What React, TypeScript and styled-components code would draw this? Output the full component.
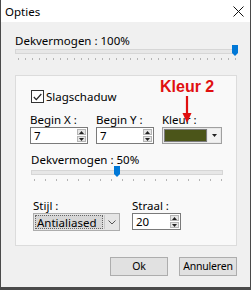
import React from 'react'
import styled, { createGlobalStyle } from 'styled-components'

const GlobalStyle = createGlobalStyle`
  html, body {
    margin: 0;
    padding: 0;
    background: #f0f0f0;
  }
  body {
    font-family: 'Noto Sans', 'Liberation Sans', sans-serif;
    font-size: 11.5px;
    color: #000;
  }
`

const Window = styled.div`
  width: 251px;
  height: 290px;
  box-sizing: border-box;
  display: flex;
  flex-direction: column;
  background: #f0f0f0;
  border-left: 1px solid #4a4a4a;
  border-right: 1px solid #4a4a4a;
  border-bottom: 3px solid #4a4a4a;
`

const TitleBar = styled.div`
  height: 22px;
  flex-shrink: 0;
  background: #fff;
  display: flex;
  align-items: center;
  justify-content: space-between;
  padding: 0 6px 0 4px;
`

const Title = styled.span`
  font-size: 11.5px;
  line-height: 15px;
`

const Body = styled.div`
  flex: 1;
  display: flex;
  flex-direction: column;
  padding: 0 13px 0 14px;
`

const Label = styled.div<{ $top?: number }>`
  line-height: 15px;
  margin-top: ${(p) => p.$top ?? 0}px;
  white-space: nowrap;
`

const SliderWrap = styled.div<{ $width?: string; $top: number }>`
  position: relative;
  width: ${(p) => p.$width ?? '100%'};
  height: 17px;
  margin-top: ${(p) => p.$top}px;
`

const Track = styled.div`
  position: absolute;
  left: 0;
  right: 0;
  top: 4px;
  height: 3px;
  background: #e7e7e7;
  border: 1px solid #d6d6d6;
`

const Ticks = styled.div<{ $step: number }>`
  position: absolute;
  left: 3px;
  right: 1px;
  top: 13px;
  height: 2px;
  background: repeating-linear-gradient(
    to right,
    #b4b4b4 0,
    #b4b4b4 1px,
    transparent 1px,
    transparent ${(p) => p.$step}px
  );
`

const Thumb = styled.svg`
  position: absolute;
  top: 0;
`

const Panel = styled.div`
  position: relative;
  margin-top: 13px;
  height: 171px;
  box-sizing: border-box;
  background: #f9f9f9;
  border: 1px solid #dcdcdc;
  padding: 0 14px 0 15px;
  display: flex;
  flex-direction: column;
`

const CheckRow = styled.label`
  display: flex;
  align-items: center;
  gap: 2px;
  margin-top: 13px;
  line-height: 15px;
`

const CheckBox = styled.span`
  width: 11px;
  height: 11px;
  border: 1px solid #333;
  background: #fff;
  display: flex;
  align-items: center;
  justify-content: center;
`

const FieldRow = styled.div`
  display: flex;
  gap: 9px;
  margin-top: 8px;
`

const Field = styled.div<{ $shift?: number }>`
  display: flex;
  flex-direction: column;
  margin-left: ${(p) => p.$shift ?? -1}px;
`

const SpinBox = styled.div<{ $width: number }>`
  width: ${(p) => p.$width}px;
  height: 17px;
  box-sizing: border-box;
  border: 1px solid #7a7a7a;
  background: #fff;
  display: flex;
  align-items: center;
  justify-content: space-between;
  padding: 1px 1px 1px 3px;
`

const SpinValue = styled.span`
  line-height: 14px;
`

const SpinButtons = styled.div`
  display: flex;
  flex-direction: column;
  gap: 1px;
  height: 13px;
`

const SpinBtn = styled.div`
  width: 9px;
  height: 6px;
  background: #e6e6e6;
  border: 1px solid #b5b5b5;
  box-sizing: border-box;
  display: flex;
  align-items: center;
  justify-content: center;
`

const ColorCombo = styled.div`
  width: 60px;
  height: 17px;
  box-sizing: border-box;
  border: 1px solid #a0a0a0;
  background: #e8e8e8;
  display: flex;
  padding: 1px;
  gap: 1px;
`

const Swatch = styled.div<{ $color: string }>`
  flex: 1;
  background: ${(p) => p.$color};
  border: 1px solid #7c7c7c;
`

const DropBtn = styled.div`
  width: 12px;
  display: flex;
  align-items: center;
  justify-content: center;
  background: #f2f2f2;
`

const Select = styled.div`
  width: 87px;
  height: 18px;
  box-sizing: border-box;
  border: 1px solid #adadad;
  background: #e5e5e5;
  display: flex;
  align-items: stretch;
  padding: 1px;
`

const SelectText = styled.div`
  flex: 1;
  display: flex;
  align-items: center;
  padding-left: 1px;
  background: #d6d6d6;
  border: 1px dotted #666;
  line-height: 13px;
  white-space: nowrap;
  overflow: hidden;
`

const Chevron = styled.div`
  width: 13px;
  display: flex;
  align-items: center;
  justify-content: center;
  border-left: 1px solid #c9c9c9;
  margin-left: 1px;
`

const BottomRow = styled.div`
  display: flex;
  gap: 13px;
`

const Annotation = styled.div`
  position: absolute;
  left: 144px;
  top: 2px;
  display: flex;
  flex-direction: column;
  align-items: center;
  color: #e01010;
  font-family: 'Liberation Sans', Arial, sans-serif;
  font-weight: bold;
  font-size: 16px;
  line-height: 18px;
  pointer-events: none;
`

const Footer = styled.div`
  display: flex;
  justify-content: flex-end;
  gap: 11px;
  margin-top: 11px;
  padding-right: 0px;
`

const Button = styled.button`
  width: 58px;
  height: 19px;
  box-sizing: border-box;
  background: #e1e1e1;
  border: 1px solid #adadad;
  font-family: inherit;
  font-size: 10.5px;
  letter-spacing: -0.2px;
  line-height: 15px;
  padding: 0;
  color: #000;
`

const ThumbIcon = ({ left }: { left: number }) => (
  <Thumb width='6' height='11' viewBox='0 0 6 11' style={{ left }}>
    <path d='M0 0 H6 V8 L3 11 L0 8 Z' fill='#0078d7' />
  </Thumb>
)

const Arrow = ({ up }: { up: boolean }) => (
  <svg width='5' height='3' viewBox='0 0 5 3'>
    <path d={up ? 'M2.5 0 L5 3 H0 Z' : 'M0 0 H5 L2.5 3 Z'} fill='#222' />
  </svg>
)

const Spin = ({ value, width }: { value: string; width: number }) => (
  <SpinBox $width={width}>
    <SpinValue>{value}</SpinValue>
    <SpinButtons>
      <SpinBtn>
        <Arrow up />
      </SpinBtn>
      <SpinBtn>
        <Arrow up={false} />
      </SpinBtn>
    </SpinButtons>
  </SpinBox>
)

export default function App() {
  return (
    <>
      <GlobalStyle />
      <Window>
        <TitleBar>
          <Title>Opties</Title>
          <svg width='11' height='11' viewBox='0 0 11 11'>
            <path d='M0.5 0.5 L10.5 10.5 M10.5 0.5 L0.5 10.5' stroke='#111' strokeWidth='1' />
          </svg>
        </TitleBar>
        <Body>
          <Label $top={11}>Dekvermogen : 100%</Label>
          <SliderWrap $top={-3}>
            <Track />
            <Ticks $step={7} />
            <ThumbIcon left={217} />
          </SliderWrap>

          <Panel>
            <CheckRow>
              <CheckBox>
                <svg width='9' height='8' viewBox='0 0 9 8'>
                  <path d='M0.8 4 L3.3 6.6 L8.3 1' stroke='#222' strokeWidth='1.2' fill='none' />
                </svg>
              </CheckBox>
              Slagschaduw
            </CheckRow>

            <FieldRow>
              <Field>
                <Label>Begin X :</Label>
                <Spin value='7' width={58} />
              </Field>
              <Field>
                <Label>Begin Y :</Label>
                <Spin value='7' width={58} />
              </Field>
              <Field>
                <Label>Kleur :</Label>
                <ColorCombo>
                  <Swatch $color='#4b5519' />
                  <DropBtn>
                    <Arrow up={false} />
                  </DropBtn>
                </ColorCombo>
              </Field>
            </FieldRow>

            <Label $top={8}>Dekvermogen : 50%</Label>
            <SliderWrap $width='192px' $top={-1}>
              <Track />
              <Ticks $step={11} />
              <ThumbIcon left={83} />
            </SliderWrap>

            <BottomRow>
              <Field $shift={2}>
                <Label $top={15}>Stijl :</Label>
                <Select>
                  <SelectText>Antialiased</SelectText>
                  <Chevron>
                    <svg width='8' height='5' viewBox='0 0 8 5'>
                      <path d='M0.5 0.5 L4 4 L7.5 0.5' stroke='#555' fill='none' />
                    </svg>
                  </Chevron>
                </Select>
              </Field>
              <Field>
                <Label $top={15}>Straal :</Label>
                <Spin value='20' width={49} />
              </Field>
            </BottomRow>

            <Annotation>
              <span>Kleur 2</span>
              <svg width='10' height='27' viewBox='0 0 10 27'>
                <path d='M5 0 V19' stroke='#e01010' strokeWidth='2.2' />
                <path d='M0.5 17 L9.5 17 L5 27 Z' fill='#e01010' />
              </svg>
            </Annotation>
          </Panel>

          <Footer>
            <Button>Ok</Button>
            <Button>Annuleren</Button>
          </Footer>
        </Body>
      </Window>
    </>
  )
}
